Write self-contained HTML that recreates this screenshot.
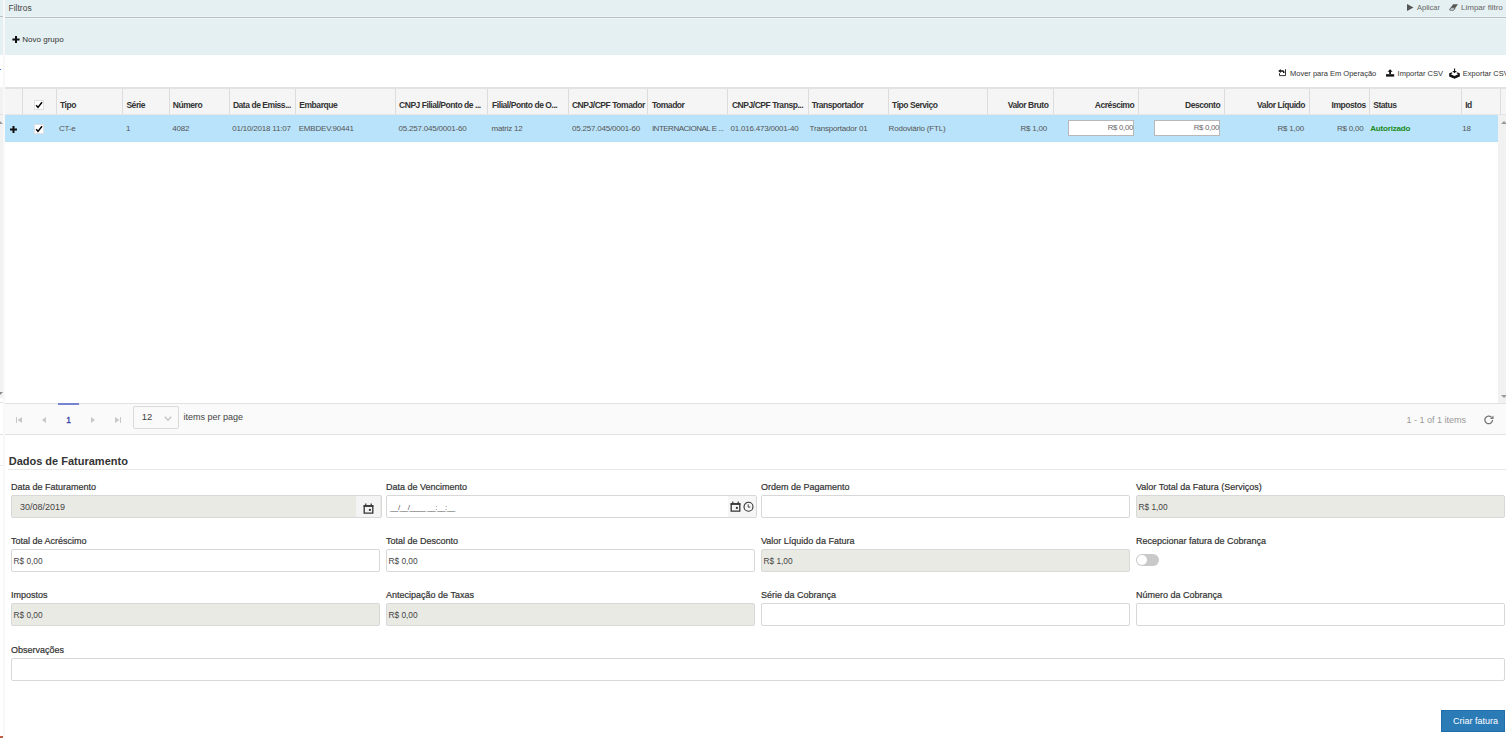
<!DOCTYPE html>
<html><head><meta charset="utf-8"><style>
*{box-sizing:border-box;margin:0;padding:0}
html,body{width:1506px;height:738px;overflow:hidden;background:#fff;font-family:"Liberation Sans",sans-serif;color:#333}
.a{position:absolute}
.t{position:absolute;white-space:nowrap;line-height:1}
.h{font-weight:bold;font-size:7.5px;color:#333}
.d{font-size:7.5px;color:#555}
.lab{font-size:9px;color:#3a3a3a}
.inp{position:absolute;height:23px;border:1px solid #d8d8d8;border-radius:2px;background:#fff}
.dis{background:#eaeae4}
.val{font-size:8.3px;color:#444}
</style></head><body>
<div class="a" style="left:0px;top:0px;width:3px;height:738px;background:#fff;"></div>
<div class="a" style="left:0px;top:0px;width:3px;height:55px;background:#e5f0f2;"></div>
<div class="a" style="left:0px;top:16px;width:3px;height:1px;background:#b9c1c4;"></div>
<div class="a" style="left:0px;top:87px;width:3px;height:311px;background:#f2f2f2;"></div>
<div class="a" style="left:3px;top:0px;width:2px;height:738px;background:#f8f8f8;"></div>
<svg class="a" style="left:-3px;top:120px" width="6" height="5" viewBox="0 0 6 5"><path d="M0 4L3 1L6 4Z" fill="#999"/></svg>
<svg class="a" style="left:-3px;top:391px" width="6" height="5" viewBox="0 0 6 5"><path d="M0 1L3 4L6 1Z" fill="#888"/></svg>
<div class="a" style="left:0px;top:402px;width:3px;height:1px;background:#e2e2e2;"></div>
<div class="a" style="left:0px;top:434px;width:3px;height:1px;background:#e2e2e2;"></div>
<div class="a" style="left:0px;top:465px;width:3px;height:1px;background:#e8e8e8;"></div>
<div class="a" style="left:0px;top:114px;width:3px;height:1px;background:#e2e2e2;"></div>
<div class="a" style="left:0px;top:69px;width:1px;height:1px;background:#3a7be0;"></div>
<div class="a" style="left:0px;top:736px;width:3px;height:2px;background:#c06040;"></div>
<div class="a" style="left:5px;top:0px;width:1501px;height:55px;background:#e5f0f2;"></div>
<div class="a" style="left:5px;top:16px;width:1501px;height:1px;background:#edf4f5;"></div>
<div class="a" style="left:5px;top:17px;width:1501px;height:1px;background:#b9c1c4;"></div>
<div class="a" style="left:5px;top:18px;width:1501px;height:1px;background:#eef5f6;"></div>
<div class="t" style="left:8.5px;top:3.8px;font-size:8.5px;color:#444;font-weight:normal;">Filtros</div>
<svg class="a" style="left:1407px;top:4px" width="7" height="7" viewBox="0 0 7 7"><path d="M0 0L6.5 3.5L0 7Z" fill="#555"/></svg>
<div class="t" style="left:1417px;top:3.95px;font-size:7.5px;color:#666;font-weight:normal;">Aplicar</div>
<svg class="a" style="left:1449px;top:4px" width="9" height="7" viewBox="0 0 9 7"><path d="M4.2 0.2H9L6.4 3.8H1.6Z" fill="#555"/><path d="M1.7 3.9H6.2L4.6 6.2H1Q0.3 6.2 0.8 5.3Z" fill="none" stroke="#555" stroke-width="0.9"/></svg>
<div class="t" style="left:1461px;top:3.53px;font-size:8px;color:#666;font-weight:normal;">Limpar filtro</div>
<svg class="a" style="left:12px;top:35.5px" width="8" height="7" viewBox="0 0 8 7"><path d="M3 0H5V2.5H7.6V4.5H5V7H3V4.5H0.4V2.5H3Z" fill="#111"/></svg>
<div class="t" style="left:22.3px;top:35.53px;font-size:8px;color:#333;font-weight:normal;">Novo grupo</div>
<svg class="a" style="left:1278px;top:68px" width="9" height="9" viewBox="0 0 9 9"><path d="M7.5 1.2V7.6H1.5V5.2" fill="none" stroke="#333" stroke-width="1"/><path d="M2.5 3H4.7Q5.8 3 5.8 4.2V5" fill="none" stroke="#111" stroke-width="1.5"/><path d="M0.2 3L2.8 1V5Z" fill="#111"/></svg>
<div class="t" style="left:1290px;top:69.65px;font-size:7.5px;color:#333;font-weight:normal;">Mover para Em Operação</div>
<svg class="a" style="left:1386px;top:69px" width="9" height="8" viewBox="0 0 9 8"><path d="M4.1 0.3L6.6 2.8H5V5H3.2V2.8H1.6Z" fill="#111"/><path d="M0 5.2H8.2V7.6H0Z" fill="#111"/></svg>
<div class="t" style="left:1397.6px;top:69.65px;font-size:7.5px;color:#333;font-weight:normal;">Importar CSV</div>
<svg class="a" style="left:1449px;top:67.5px" width="11" height="11" viewBox="0 0 11 11"><path d="M5 0.4H6.1V3.1H7.9L5.55 5.2L3.2 3.1H5Z" fill="#111"/><path d="M3.2 4.9L0.8 5.7V8.1L5.5 10L10.2 8.1V5.7L7.8 4.9" fill="none" stroke="#111" stroke-width="1.2"/><path d="M0.8 5.7L5.5 7.9L10.2 5.7V8.1L5.5 10L0.8 8.1Z" fill="#111"/></svg>
<div class="t" style="left:1462.8px;top:69.65px;font-size:7.5px;color:#333;font-weight:normal;">Exportar CSV</div>
<div class="a" style="left:5px;top:87px;width:1501px;height:2px;background:#e2e2e2;"></div>
<div class="a" style="left:5px;top:89px;width:1501px;height:26px;background:#f5f5f5;"></div>
<div class="a" style="left:5px;top:114px;width:1501px;height:1px;background:#e6e6e6;"></div>
<div class="a" style="left:5px;top:115px;width:1493px;height:27px;background:#b9e3fa;"></div>
<div class="a" style="left:22px;top:89px;width:1px;height:25px;background:#dcdcdc;"></div>
<div class="a" style="left:56px;top:89px;width:1px;height:25px;background:#dcdcdc;"></div>
<div class="a" style="left:122px;top:89px;width:1px;height:25px;background:#dcdcdc;"></div>
<div class="a" style="left:169px;top:89px;width:1px;height:25px;background:#dcdcdc;"></div>
<div class="a" style="left:229px;top:89px;width:1px;height:25px;background:#dcdcdc;"></div>
<div class="a" style="left:295px;top:89px;width:1px;height:25px;background:#dcdcdc;"></div>
<div class="a" style="left:395px;top:89px;width:1px;height:25px;background:#dcdcdc;"></div>
<div class="a" style="left:487px;top:89px;width:1px;height:25px;background:#dcdcdc;"></div>
<div class="a" style="left:568px;top:89px;width:1px;height:25px;background:#dcdcdc;"></div>
<div class="a" style="left:647px;top:89px;width:1px;height:25px;background:#dcdcdc;"></div>
<div class="a" style="left:727px;top:89px;width:1px;height:25px;background:#dcdcdc;"></div>
<div class="a" style="left:808px;top:89px;width:1px;height:25px;background:#dcdcdc;"></div>
<div class="a" style="left:888px;top:89px;width:1px;height:25px;background:#dcdcdc;"></div>
<div class="a" style="left:987px;top:89px;width:1px;height:25px;background:#dcdcdc;"></div>
<div class="a" style="left:1053px;top:89px;width:1px;height:25px;background:#dcdcdc;"></div>
<div class="a" style="left:1138px;top:89px;width:1px;height:25px;background:#dcdcdc;"></div>
<div class="a" style="left:1224px;top:89px;width:1px;height:25px;background:#dcdcdc;"></div>
<div class="a" style="left:1309px;top:89px;width:1px;height:25px;background:#dcdcdc;"></div>
<div class="a" style="left:1369px;top:89px;width:1px;height:25px;background:#dcdcdc;"></div>
<div class="a" style="left:1461px;top:89px;width:1px;height:25px;background:#dcdcdc;"></div>
<div class="a" style="left:1500px;top:89px;width:1px;height:25px;background:#dcdcdc;"></div>
<div class="a" style="left:1498px;top:115px;width:8px;height:288px;background:#f1f1f1;"></div>
<svg class="a" style="left:1501px;top:119.5px" width="6" height="5" viewBox="0 0 6 5"><path d="M0 4L3 1L6 4Z" fill="#999"/></svg>
<svg class="a" style="left:1501px;top:393.5px" width="6" height="5" viewBox="0 0 6 5"><path d="M0 1L3 4L6 1Z" fill="#999"/></svg>
<div class="t" style="left:60px;top:100.8px;font-size:8.5px;color:#333;font-weight:bold;letter-spacing:-0.45px">Tipo</div>
<div class="t" style="left:126.4px;top:100.8px;font-size:8.5px;color:#333;font-weight:bold;letter-spacing:-0.45px">Série</div>
<div class="t" style="left:172.8px;top:100.8px;font-size:8.5px;color:#333;font-weight:bold;letter-spacing:-0.45px">Número</div>
<div class="t" style="left:232.9px;top:100.8px;font-size:8.5px;color:#333;font-weight:bold;letter-spacing:-0.45px">Data de Emiss...</div>
<div class="t" style="left:299.3px;top:100.8px;font-size:8.5px;color:#333;font-weight:bold;letter-spacing:-0.45px">Embarque</div>
<div class="t" style="left:399px;top:100.8px;font-size:8.5px;color:#333;font-weight:bold;letter-spacing:-0.45px">CNPJ Filial/Ponto de ...</div>
<div class="t" style="left:492.1px;top:100.8px;font-size:8.5px;color:#333;font-weight:bold;letter-spacing:-0.45px">Filial/Ponto de O...</div>
<div class="t" style="left:571.9px;top:100.8px;font-size:8.5px;color:#333;font-weight:bold;letter-spacing:-0.45px">CNPJ/CPF Tomador</div>
<div class="t" style="left:651.9px;top:100.8px;font-size:8.5px;color:#333;font-weight:bold;letter-spacing:-0.45px">Tomador</div>
<div class="t" style="left:731.9px;top:100.8px;font-size:8.5px;color:#333;font-weight:bold;letter-spacing:-0.45px">CNPJ/CPF Transp...</div>
<div class="t" style="left:811.7px;top:100.8px;font-size:8.5px;color:#333;font-weight:bold;letter-spacing:-0.45px">Transportador</div>
<div class="t" style="left:892.1px;top:100.8px;font-size:8.5px;color:#333;font-weight:bold;letter-spacing:-0.45px">Tipo Serviço</div>
<div class="t" style="right:457.5px;top:100.8px;font-size:8.5px;color:#333;font-weight:bold;text-align:right;letter-spacing:-0.45px">Valor Bruto</div>
<div class="t" style="right:371.79999999999995px;top:100.8px;font-size:8.5px;color:#333;font-weight:bold;text-align:right;letter-spacing:-0.45px">Acréscimo</div>
<div class="t" style="right:285.79999999999995px;top:100.8px;font-size:8.5px;color:#333;font-weight:bold;text-align:right;letter-spacing:-0.45px">Desconto</div>
<div class="t" style="right:200.9000000000001px;top:100.8px;font-size:8.5px;color:#333;font-weight:bold;text-align:right;letter-spacing:-0.45px">Valor Líquido</div>
<div class="t" style="right:140.29999999999995px;top:100.8px;font-size:8.5px;color:#333;font-weight:bold;text-align:right;letter-spacing:-0.45px">Impostos</div>
<div class="t" style="left:1373.2px;top:100.8px;font-size:8.5px;color:#333;font-weight:bold;letter-spacing:-0.45px">Status</div>
<div class="t" style="left:1465.2px;top:100.8px;font-size:8.5px;color:#333;font-weight:bold;letter-spacing:-0.45px">Id</div>
<svg class="a" style="left:34px;top:100px" width="10" height="10" viewBox="0 0 10 10"><rect x="0.5" y="0.5" width="9" height="9" fill="#fff" stroke="#e0e0e0"/><path d="M2.2 5.2L4 7.4L8 2.3" fill="none" stroke="#000" stroke-width="1.5"/></svg>
<svg class="a" style="left:34px;top:124px" width="10" height="10" viewBox="0 0 10 10"><rect x="0.5" y="0.5" width="9" height="9" fill="#fff" stroke="#e0e0e0"/><path d="M2.2 5.2L4 7.4L8 2.3" fill="none" stroke="#000" stroke-width="1.5"/></svg>
<svg class="a" style="left:10px;top:125.5px" width="7" height="7" viewBox="0 0 7 7"><path d="M2.5 0H4.5V2.5H7V4.5H4.5V7H2.5V4.5H0V2.5H2.5Z" fill="#111"/></svg>
<div class="t" style="left:59px;top:125.23px;font-size:8px;color:#555;font-weight:normal;letter-spacing:-0.2px">CT-e</div>
<div class="t" style="left:126px;top:125.23px;font-size:8px;color:#555;font-weight:normal;letter-spacing:-0.2px">1</div>
<div class="t" style="left:172.2px;top:125.23px;font-size:8px;color:#555;font-weight:normal;letter-spacing:-0.2px">4082</div>
<div class="t" style="left:232.2px;top:125.23px;font-size:8px;color:#555;font-weight:normal;letter-spacing:-0.2px">01/10/2018 11:07</div>
<div class="t" style="left:298.7px;top:125.23px;font-size:8px;color:#555;font-weight:normal;letter-spacing:-0.2px">EMBDEV.90441</div>
<div class="t" style="left:398.4px;top:125.23px;font-size:8px;color:#555;font-weight:normal;letter-spacing:-0.2px">05.257.045/0001-60</div>
<div class="t" style="left:491.5px;top:125.23px;font-size:8px;color:#555;font-weight:normal;letter-spacing:-0.2px">matriz 12</div>
<div class="t" style="left:571.9px;top:125.23px;font-size:8px;color:#555;font-weight:normal;letter-spacing:-0.2px">05.257.045/0001-60</div>
<div class="t" style="left:651.9px;top:125.23px;font-size:8px;color:#555;font-weight:normal;letter-spacing:-0.5px">INTERNACIONAL E ...</div>
<div class="t" style="left:730.5px;top:125.23px;font-size:8px;color:#555;font-weight:normal;letter-spacing:-0.2px">01.016.473/0001-40</div>
<div class="t" style="left:809.6px;top:125.23px;font-size:8px;color:#555;font-weight:normal;letter-spacing:-0.2px">Transportador 01</div>
<div class="t" style="left:888.6px;top:125.23px;font-size:8px;color:#555;font-weight:normal;letter-spacing:-0.2px">Rodoviário (FTL)</div>
<div class="t" style="right:458.9000000000001px;top:125.23px;font-size:8px;color:#555;font-weight:normal;text-align:right;letter-spacing:-0.2px">R$ 1,00</div>
<div class="t" style="right:202px;top:125.23px;font-size:8px;color:#555;font-weight:normal;text-align:right;letter-spacing:-0.2px">R$ 1,00</div>
<div class="t" style="right:142.4000000000001px;top:125.23px;font-size:8px;color:#555;font-weight:normal;text-align:right;letter-spacing:-0.2px">R$ 0,00</div>
<div class="t" style="left:1462.2px;top:125.23px;font-size:8px;color:#555;font-weight:normal;letter-spacing:-0.2px">18</div>
<div class="t" style="left:1370.3px;top:125.23px;font-size:8px;color:#1b8a1b;font-weight:bold;letter-spacing:-0.2px">Autorizado</div>
<div class="a" style="left:1068px;top:120px;width:66px;height:16px;background:#fff;border:1px solid #b8b8b8"></div>
<div class="t" style="right:373px;top:123.9px;font-size:7.8px;color:#666;font-weight:normal;text-align:right;letter-spacing:-0.3px">R$ 0,00</div>
<div class="a" style="left:1154px;top:120px;width:66px;height:16px;background:#fff;border:1px solid #b8b8b8"></div>
<div class="t" style="right:287px;top:123.9px;font-size:7.8px;color:#666;font-weight:normal;text-align:right;letter-spacing:-0.3px">R$ 0,00</div>
<div class="a" style="left:5px;top:403px;width:1501px;height:32px;background:#fafafa;border-top:1px solid #e2e2e2;border-bottom:1px solid #e2e2e2"></div>
<div class="a" style="left:58px;top:403px;width:21px;height:2px;background:#7583d0;"></div>
<svg class="a" style="left:16px;top:417px" width="6" height="6" viewBox="0 0 6 6"><path d="M0 0H1V6H0Z M6 0V6L1.5 3Z" fill="#c8c8c8"/></svg>
<svg class="a" style="left:41.5px;top:417px" width="4" height="6" viewBox="0 0 4 6"><path d="M4 0V6L0 3Z" fill="#c8c8c8"/></svg>
<div class="t" style="left:66.2px;top:415.8px;font-size:8.5px;color:#3d46a6;font-weight:normal;-webkit-text-stroke:0.35px #3d46a6">1</div>
<svg class="a" style="left:90.5px;top:417px" width="4" height="6" viewBox="0 0 4 6"><path d="M0 0V6L4 3Z" fill="#c8c8c8"/></svg>
<svg class="a" style="left:114.5px;top:417px" width="6" height="6" viewBox="0 0 6 6"><path d="M5 0H6V6H5Z M0 0V6L4.5 3Z" fill="#c8c8c8"/></svg>
<div class="a" style="left:133px;top:406px;width:46px;height:23px;background:#fafafa;border:1px solid #dadada;border-radius:2px"></div>
<div class="t" style="left:141.8px;top:412.16px;font-size:9.5px;color:#444;font-weight:normal;">12</div>
<svg class="a" style="left:163.5px;top:415.5px" width="8" height="6" viewBox="0 0 8 6"><path d="M0.8 0.8L4 4.3L7.2 0.8" fill="none" stroke="#c4c4c4" stroke-width="1.4"/></svg>
<div class="t" style="left:183.4px;top:413.38px;font-size:9px;color:#444;font-weight:normal;">items per page</div>
<div class="t" style="right:40px;top:415.58px;font-size:9px;color:#999;font-weight:normal;text-align:right;">1 - 1 of 1 items</div>
<svg class="a" style="left:1484px;top:414.5px" width="11" height="10" viewBox="0 0 11 10"><path d="M8.5 5A3.8 3.8 0 1 1 7.4 2.2" fill="none" stroke="#777" stroke-width="1.3"/><path d="M9.5 0.5V4H6Z" fill="#777"/></svg>
<div class="t" style="left:8.7px;top:456.09px;font-size:11px;color:#333;font-weight:bold;">Dados de Faturamento</div>
<div class="a" style="left:8px;top:469px;width:1498px;height:1px;background:#e8e8e8;"></div>
<div class="t" style="left:11px;top:482.68px;font-size:9px;color:#333;font-weight:normal;-webkit-text-stroke:0.2px #333">Data de Faturamento</div>
<div class="t" style="left:386px;top:482.68px;font-size:9px;color:#333;font-weight:normal;-webkit-text-stroke:0.2px #333">Data de Vencimento</div>
<div class="t" style="left:761px;top:482.68px;font-size:9px;color:#333;font-weight:normal;-webkit-text-stroke:0.2px #333">Ordem de Pagamento</div>
<div class="t" style="left:1136px;top:482.68px;font-size:9px;color:#333;font-weight:normal;-webkit-text-stroke:0.2px #333">Valor Total da Fatura (Serviços)</div>
<div class="t" style="left:11px;top:537.28px;font-size:9px;color:#333;font-weight:normal;-webkit-text-stroke:0.2px #333">Total de Acréscimo</div>
<div class="t" style="left:386px;top:537.28px;font-size:9px;color:#333;font-weight:normal;-webkit-text-stroke:0.2px #333">Total de Desconto</div>
<div class="t" style="left:761px;top:537.28px;font-size:9px;color:#333;font-weight:normal;-webkit-text-stroke:0.2px #333">Valor Líquido da Fatura</div>
<div class="t" style="left:1136px;top:537.28px;font-size:9px;color:#333;font-weight:normal;-webkit-text-stroke:0.2px #333">Recepcionar fatura de Cobrança</div>
<div class="t" style="left:11px;top:591.38px;font-size:9px;color:#333;font-weight:normal;-webkit-text-stroke:0.2px #333">Impostos</div>
<div class="t" style="left:386px;top:591.38px;font-size:9px;color:#333;font-weight:normal;-webkit-text-stroke:0.2px #333">Antecipação de Taxas</div>
<div class="t" style="left:761px;top:591.38px;font-size:9px;color:#333;font-weight:normal;-webkit-text-stroke:0.2px #333">Série da Cobrança</div>
<div class="t" style="left:1136px;top:591.38px;font-size:9px;color:#333;font-weight:normal;-webkit-text-stroke:0.2px #333">Número da Cobrança</div>
<div class="t" style="left:11px;top:645.88px;font-size:9px;color:#333;font-weight:normal;-webkit-text-stroke:0.2px #333">Observações</div>
<div class="inp dis" style="left:11px;top:495px;width:371px;height:23px"></div>
<div class="a" style="left:356px;top:496px;width:24px;height:21px;background:#f4f4f4;"></div>
<div class="t" style="left:20px;top:502.78px;font-size:9px;color:#444;font-weight:normal;">30/08/2019</div>
<svg class="a" style="left:363px;top:502.5px" width="11" height="11" viewBox="0 0 11 11"><path d="M1.2 2.8H9.8V10.2H1.2Z" fill="none" stroke="#333" stroke-width="1.3"/><path d="M0.6 2.2H10.4V3.8H0.6Z" fill="#333"/><path d="M2.8 0.4V2.4M8.2 0.4V2.4" stroke="#333" stroke-width="1.2"/><circle cx="6.9" cy="6.9" r="1.15" fill="#333"/></svg>
<div class="inp" style="left:386px;top:495px;width:371px;height:23px"></div>
<div class="a" style="left:728px;top:496px;width:28px;height:21px;background:#f6f6f6;"></div>
<div class="t" style="left:390px;top:503.73px;font-size:8px;color:#555;font-weight:normal;letter-spacing:-0.45px">__/__/____ __:__:__</div>
<svg class="a" style="left:730px;top:500.5px" width="11" height="11" viewBox="0 0 11 11"><path d="M1.2 2.8H9.8V10.2H1.2Z" fill="none" stroke="#333" stroke-width="1.3"/><path d="M0.6 2.2H10.4V3.8H0.6Z" fill="#333"/><path d="M2.8 0.4V2.4M8.2 0.4V2.4" stroke="#333" stroke-width="1.2"/><circle cx="6.9" cy="6.9" r="1.15" fill="#333"/></svg>
<svg class="a" style="left:742.5px;top:500.5px" width="11" height="11" viewBox="0 0 11 11"><circle cx="5.5" cy="5.7" r="4.5" fill="none" stroke="#333" stroke-width="1.1"/><path d="M5.2 3.3V6.1H7.4" fill="none" stroke="#333" stroke-width="0.9"/></svg>
<div class="inp" style="left:761px;top:495px;width:369px"></div>
<div class="inp dis" style="left:1136px;top:495px;width:369px"></div>
<div class="t" style="left:1138.5px;top:502.97px;font-size:8.3px;color:#444;font-weight:normal;">R$ 1,00</div>
<div class="inp" style="left:11px;top:549px;width:369px"></div>
<div class="t" style="left:13.5px;top:556.97px;font-size:8.3px;color:#444;font-weight:normal;">R$ 0,00</div>
<div class="inp" style="left:386px;top:549px;width:369px"></div>
<div class="t" style="left:388.5px;top:556.97px;font-size:8.3px;color:#444;font-weight:normal;">R$ 0,00</div>
<div class="inp dis" style="left:761px;top:549px;width:369px"></div>
<div class="t" style="left:763.5px;top:556.97px;font-size:8.3px;color:#444;font-weight:normal;">R$ 1,00</div>
<div class="a" style="left:1136px;top:554px;width:23px;height:12px;border-radius:6px;background:#c9c9c9"></div>
<div class="a" style="left:1137px;top:555px;width:10px;height:10px;border-radius:5px;background:#fff"></div>
<div class="inp dis" style="left:11px;top:603px;width:369px"></div>
<div class="t" style="left:13.5px;top:610.97px;font-size:8.3px;color:#444;font-weight:normal;">R$ 0,00</div>
<div class="inp dis" style="left:386px;top:603px;width:369px"></div>
<div class="t" style="left:388.5px;top:610.97px;font-size:8.3px;color:#444;font-weight:normal;">R$ 0,00</div>
<div class="inp" style="left:761px;top:603px;width:369px"></div>
<div class="inp" style="left:1136px;top:603px;width:369px"></div>
<div class="inp" style="left:11px;top:658px;width:1494px"></div>
<div class="a" style="left:1441px;top:710px;width:64px;height:22px;background:#2b7bb7;border:1px solid #1f6eab"></div>
<div class="t" style="left:1453px;top:716.78px;font-size:9px;color:#fff;font-weight:normal;">Criar fatura</div>
</body></html>
